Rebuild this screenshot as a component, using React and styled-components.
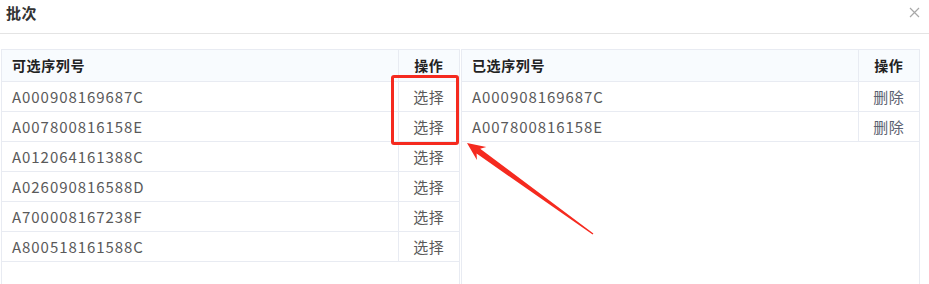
import React from 'react';
import styled, { createGlobalStyle } from 'styled-components';

const GlobalStyle = createGlobalStyle`
  html, body {
    margin: 0;
    padding: 0;
    background: #fff;
    overflow: hidden;
  }
  body {
    font-family: "Noto Sans CJK SC", "Noto Sans", sans-serif;
  }
`;

const Dialog = styled.div`
  position: relative;
  width: 929px;
  height: 284px;
  overflow: hidden;
  background: #fff;
`;

const TitleBar = styled.div`
  height: 34px;
  display: flex;
  align-items: center;
  justify-content: space-between;
  padding: 0 8px 0 6px;
  box-sizing: border-box;
  border-bottom: 1px solid #e4e4e4;
`;

const Title = styled.h3`
  margin: 0 0 8px;
  font-size: 15px;
  font-weight: 700;
  color: #333;
  letter-spacing: 0.5px;
`;

const Close = styled.button`
  border: none;
  background: none;
  padding: 0;
  margin: 0 0 8px;
  width: 12px;
  height: 12px;
  display: flex;
  cursor: pointer;
`;

const Body = styled.div`
  display: flex;
  gap: 1px;
  padding: 15px 9px 0 1px;
`;

const Panel = styled.div`
  width: 459px;
  height: 260px;
  box-sizing: border-box;
  border: 1px solid #e8ebf2;
`;

const Table = styled.table`
  width: 100%;
  border-collapse: collapse;
  table-layout: fixed;
`;

const Th = styled.th`
  height: 31px;
  padding: 0 10px;
  background: #f8fbfe;
  color: #222;
  font-size: 14px;
  letter-spacing: 0.6px;
  font-weight: 700;
  text-align: ${({ $center }) => ($center ? 'center' : 'left')};
  border-bottom: 1px solid #e8ebf2;
  border-left: ${({ $center }) => ($center ? '1px solid #e8ebf2' : 'none')};
  width: ${({ $center }) => ($center ? '61px' : 'auto')};
  box-sizing: border-box;
`;

const Td = styled.td`
  height: 29px;
  padding: 0 10px;
  color: #5a5a5a;
  font-size: 15px;
  letter-spacing: ${({ $center }) => ($center ? '0.5px' : '0.95px')};
  text-align: ${({ $center }) => ($center ? 'center' : 'left')};
  border-bottom: 1px solid #e8ebf2;
  border-left: ${({ $center }) => ($center ? '1px solid #e8ebf2' : 'none')};
  white-space: nowrap;
`;

const Action = styled.span`
  color: ${({ $danger }) => ($danger ? '#5b6270' : '#5a5a5a')};
  cursor: pointer;
`;

const Highlight = styled.div`
  position: absolute;
  left: 391px;
  top: 75px;
  width: 68px;
  height: 70px;
  box-sizing: border-box;
  border: 3px solid #f52a1f;
  border-radius: 3px;
  pointer-events: none;
`;

const Overlay = styled.svg`
  position: absolute;
  left: 0;
  top: 0;
  pointer-events: none;
`;

const available = [
  'A000908169687C',
  'A007800816158E',
  'A012064161388C',
  'A026090816588D',
  'A700008167238F',
  'A800518161588C',
];

const chosen = ['A000908169687C', 'A007800816158E'];

function SerialTable({ title, rows, action, danger }) {
  return (
    <Panel>
      <Table>
        <thead>
          <tr>
            <Th>{title}</Th>
            <Th $center>操作</Th>
          </tr>
        </thead>
        <tbody>
          {rows.map((r) => (
            <tr key={r}>
              <Td>{r}</Td>
              <Td $center>
                <Action $danger={danger}>{action}</Action>
              </Td>
            </tr>
          ))}
        </tbody>
      </Table>
    </Panel>
  );
}

export default function App() {
  return (
    <>
      <GlobalStyle />
      <Dialog>
        <TitleBar>
          <Title>批次</Title>
          <Close aria-label="close">
            <svg width="11" height="11" viewBox="0 0 11 11">
              <path d="M1 1L10 10M10 1L1 10" stroke="#a8a8a8" strokeWidth="1.2" fill="none" />
            </svg>
          </Close>
        </TitleBar>
        <Body>
          <SerialTable title="可选序列号" rows={available} action="选择" />
          <SerialTable title="已选序列号" rows={chosen} action="删除" danger />
        </Body>
        <Highlight />
        <Overlay width="929" height="284" viewBox="0 0 929 284">
          <polygon
            points="467,143 486.3,147.1 480.2,148.8 593.4,233.4 592.6,234.6 476.6,153.6 476.9,160.1"
            fill="#f52a1f"
          />
        </Overlay>
      </Dialog>
    </>
  );
}
